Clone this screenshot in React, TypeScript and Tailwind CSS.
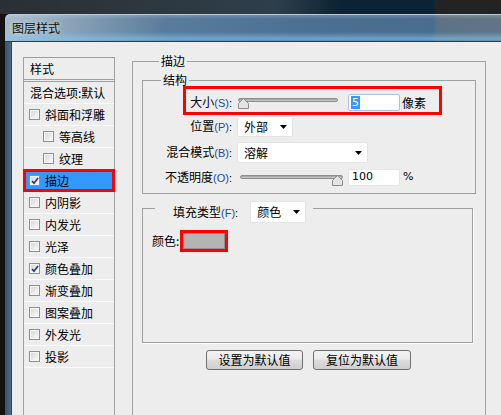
import React from "react";

function Box({ checked }: { checked?: boolean }) {
  return (
    <span className="relative inline-block w-[11px] h-[11px] shrink-0 border border-[#8e8f8f] bg-[linear-gradient(135deg,#d6d6d6,#fcfcfc)] shadow-[inset_0_0_0_1px_#f6f6f6]">
      {checked && (
        <svg className="absolute left-[1px] top-[1px]" width="8" height="8" viewBox="0 0 8 8">
          <path d="M1 4 L3 6.3 L7 1" fill="none" stroke="#23367e" strokeWidth="1.6" />
        </svg>
      )}
    </span>
  );
}

function Thumb() {
  return (
    <svg width="11" height="11" viewBox="0 0 11 11">
      <path d="M0.5 10.5 V5.5 L5.5 0.5 L10.5 5.5 V10.5 Z" fill="#e4e4e4" stroke="#8c8c8c" />
    </svg>
  );
}

function Arrow() {
  return (
    <svg width="7" height="4" viewBox="0 0 7 4">
      <path d="M0 0 H7 L3.5 4 Z" fill="#000" />
    </svg>
  );
}

function Lbl({ t, k }: { t: string; k: string }) {
  return (
    <span className="whitespace-nowrap">
      {t}
      <span className="font-['Liberation_Sans',sans-serif] text-[11px]">
        <span className="text-[#24499a]">({k})</span>:
      </span>
    </span>
  );
}

const rows: { t: string; indent?: boolean; checked?: boolean; active?: boolean }[] = [
  { t: "斜面和浮雕" },
  { t: "等高线", indent: true },
  { t: "纹理", indent: true },
  { t: "描边", checked: true, active: true },
  { t: "内阴影" },
  { t: "内发光" },
  { t: "光泽" },
  { t: "颜色叠加", checked: true },
  { t: "渐变叠加" },
  { t: "图案叠加" },
  { t: "外发光" },
  { t: "投影" },
];

export default function App() {
  return (
    <div className="w-[501px] h-[415px] overflow-hidden bg-[#121212] flex flex-col text-[12px] leading-[14px] text-black font-['Noto_Sans_CJK_SC','Noto_Sans',sans-serif]">
      <div className="h-[14px] shrink-0 bg-[linear-gradient(90deg,#2b2f33_0%,#2e3f4b_55%,#0b2335_68%,#0b2335_86.6%,#232323_87%)]" />
      <div className="flex-1 min-h-0 flex flex-col ml-[5px]">
        <div className="h-[28px] shrink-0 flex items-center pl-[7px] border-t border-t-[#b9c9d6] border-b border-b-[#2b3c4c] rounded-tl-[5px] bg-[linear-gradient(180deg,rgba(255,255,255,0.18)_0px,rgba(255,255,255,0)_4px,rgba(0,0,0,0)_17px,rgba(125,200,245,0.6)_24px,rgba(125,200,245,0.25)_26px),linear-gradient(90deg,#a8bbca_0px,#8ca5ba_60px,#5a7c9c_160px,#4c7092_300px,#4a6c8d_428px,#5e7285_432px,#627588_496px)]">
          <span className="text-[#0c0c0c] [text-shadow:0_0_6px_rgba(255,255,255,0.8)]">图层样式</span>
        </div>
        <div className="flex-1 min-h-0 flex">
          <div className="w-[6px] shrink-0 bg-[linear-gradient(90deg,#3a536b,#4d6985)]" />
          <div className="flex-1 min-w-0 flex items-start bg-[#ededed] border-l border-[#30475c]">
            {/* style list */}
            <div className="ml-[11px] mt-[15px] w-[92px] h-[400px] shrink-0 border border-[#a0a0a0] flex flex-col">
              <div className="h-[22px] shrink-0 flex items-center pl-[6px] border-b border-[#a0a0a0]">样式</div>
              <div className="h-[23px] shrink-0 flex items-center pl-[6px] border-t border-t-[#a0a0a0] border-b border-b-[#fbfbfb] mt-[1px] whitespace-nowrap">混合选项:默认</div>
              {rows.map((r) =>
                r.active ? (
                  <div
                    key={r.t}
                    className="h-[23px] shrink-0 -mt-[1px] -mx-[1px] flex items-center gap-[5px] pl-[3px] border-[3px] border-[#ff0000] bg-[#3399ff]"
                  >
                    <Box checked={r.checked} />
                    <span>{r.t}</span>
                  </div>
                ) : (
                  <div
                    key={r.t}
                    className={
                      r.indent
                        ? "h-[22px] shrink-0 flex items-center gap-[5px] pl-[19px] border-b border-[#fbfbfb]"
                        : "h-[22px] shrink-0 flex items-center gap-[5px] pl-[5px] border-b border-[#fbfbfb]"
                    }
                  >
                    <Box checked={r.checked} />
                    <span className="whitespace-nowrap">{r.t}</span>
                  </div>
                )
              )}
            </div>

            {/* 描边 group */}
            <fieldset className="ml-[17px] mt-[13px] w-[354px] h-[400px] shrink-0 border border-[#a0a0a0] pt-[7px] pl-[9px]">
              <legend className="ml-[17px] px-[2px] leading-[12px] h-[12px]">描边</legend>

              {/* 结构 */}
              <fieldset className="w-[334px] border border-[#a0a0a0] pb-[7px]">
                <legend className="ml-[18px] px-[2px] leading-[12px] h-[12px]">结构</legend>
                <div className="flex flex-col">
                  <div className="ml-[40px] w-[259px] h-[29px] border-[3px] border-[#ff0000] flex items-center pt-[4px]">
                    <div className="w-[46px] text-right">
                      <Lbl t="大小" k="S" />
                    </div>
                    <div className="relative ml-[6px] w-[100px] h-[11px] mt-[1px]">
                      <div className="h-[4px] rounded-full border border-[#8e8e8e] bg-[linear-gradient(#9c9c9c,#d0d0d0)]" />
                      <div className="absolute left-0 top-0 leading-none">
                        <Thumb />
                      </div>
                    </div>
                    <div className="ml-[10px] w-[52px] h-[17px] border border-[#a9c4df] rounded-[2px] bg-white flex items-center pl-[2px] font-['DejaVu_Sans',sans-serif] text-[11px]">
                      <span className="bg-[#3399ff] text-white px-[1px] leading-[13px]">5</span>
                    </div>
                    <span className="ml-[2px]">像素</span>
                  </div>

                  <div className="flex items-center mt-[1px]">
                    <div className="w-[89px] text-right">
                      <Lbl t="位置" k="P" />
                    </div>
                    <div className="ml-[5px] w-[56px] h-[21px] bg-white border border-[#e3e3e3] rounded-[2px] flex items-center justify-between pl-[6px] pr-[5px]">
                      <span>外部</span>
                      <Arrow />
                    </div>
                  </div>

                  <div className="flex items-center mt-[5px]">
                    <div className="w-[89px] text-right">
                      <Lbl t="混合模式" k="B" />
                    </div>
                    <div className="ml-[5px] w-[131px] h-[21px] bg-white border border-[#e3e3e3] rounded-[2px] flex items-center justify-between pl-[6px] pr-[5px]">
                      <span>溶解</span>
                      <Arrow />
                    </div>
                  </div>

                  <div className="flex items-center mt-[5px]">
                    <div className="w-[89px] text-right">
                      <Lbl t="不透明度" k="O" />
                    </div>
                    <div className="relative ml-[8px] w-[103px] h-[11px] mt-[7px]">
                      <div className="h-[4px] rounded-full border border-[#8e8e8e] bg-[linear-gradient(#9c9c9c,#d0d0d0)]" />
                      <div className="absolute right-0 top-0 leading-none">
                        <Thumb />
                      </div>
                    </div>
                    <div className="ml-[5px] w-[52px] h-[17px] border border-[#e2e6ea] rounded-[2px] bg-white flex items-center pl-[3px] font-['DejaVu_Sans',sans-serif] text-[11px]">
                      100
                    </div>
                    <span className="ml-[3px] font-['DejaVu_Sans',sans-serif] text-[11px]">%</span>
                  </div>
                </div>
              </fieldset>

              {/* 填充 */}
              <fieldset className="mt-[7px] w-[331px] h-[142px] border border-[#a0a0a0] shadow-[1px_1px_0_#ffffff]">
                <legend className="ml-[12px] pl-[18px] pr-[7px] h-[14px] flex items-start">
                  <div className="flex items-center h-[22px]">
                    <Lbl t="填充类型" k="F" />
                    <div className="ml-[12px] w-[56px] h-[22px] bg-white border border-[#e3e3e3] rounded-[2px] flex items-center justify-between pl-[6px] pr-[5px]">
                      <span>颜色</span>
                      <Arrow />
                    </div>
                  </div>
                </legend>
                <div className="flex items-center pl-[9px] pt-[15px]">
                  <span>颜色:</span>
                  <div className="ml-[1px] w-[48px] h-[22px] border-[3px] border-[#ff0000]">
                    <div className="w-full h-full border border-[#8f8f8f] bg-[#b4b4b4]" />
                  </div>
                </div>
              </fieldset>

              <div className="flex gap-[10px] ml-[64px] mt-[7px]">
                <button className="w-[97px] h-[20px] rounded-[3px] border border-[#707070] bg-[linear-gradient(#f3f3f3,#ebebeb_45%,#dddddd_50%,#cfcfcf)] text-[12px] leading-[14px]">
                  设置为默认值
                </button>
                <button className="w-[98px] h-[20px] rounded-[3px] border border-[#707070] bg-[linear-gradient(#f3f3f3,#ebebeb_45%,#dddddd_50%,#cfcfcf)] text-[12px] leading-[14px]">
                  复位为默认值
                </button>
              </div>
            </fieldset>
          </div>
        </div>
      </div>
    </div>
  );
}
